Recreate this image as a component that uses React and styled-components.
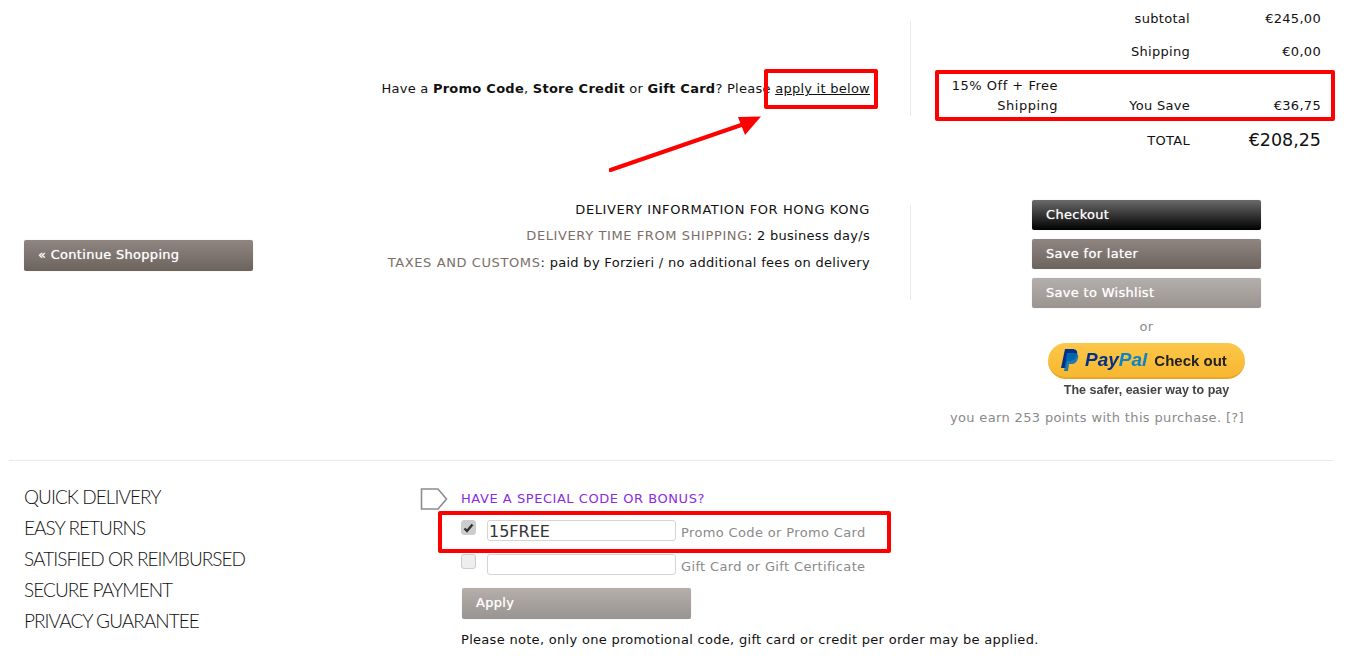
import styled, { createGlobalStyle } from "styled-components";

const GlobalStyle = createGlobalStyle`
  html, body {
    margin: 0;
    padding: 0;
    background: #fff;
    overflow: hidden;
  }
  body {
    font-family: "DejaVu Sans", Verdana, sans-serif;
    font-size: 13px;
    letter-spacing: 0.3px;
    color: #111;
  }
`;

const App = () => {
  return (
    <Page>
      <GlobalStyle />
      <TopSection>
        <PromoCol>
          <PromoText>
            Have a <b>Promo Code</b>, <b>Store Credit</b> or <b>Gift Card</b>? Please{" "}
            <u>apply it below</u>
          </PromoText>
        </PromoCol>
        <Totals>
          <Label>subtotal</Label>
          <Amount>€245,00</Amount>
          <Label>Shipping</Label>
          <Amount>€0,00</Amount>
          <DiscountName>15% Off + Free Shipping</DiscountName>
          <DiscountLabel>You Save</DiscountLabel>
          <DiscountAmount>€36,75</DiscountAmount>
          <TotalLabel>TOTAL</TotalLabel>
          <TotalAmount>€208,25</TotalAmount>
        </Totals>
      </TopSection>

      <MiddleSection>
        <ContinueCol>
          <Button $tone="brown" $wide>« Continue Shopping</Button>
        </ContinueCol>
        <DeliveryCol>
          <DeliveryTitle>DELIVERY INFORMATION FOR HONG KONG</DeliveryTitle>
          <DeliveryLine><Muted>DELIVERY TIME FROM SHIPPING</Muted>: 2 business day/s</DeliveryLine>
          <DeliveryLine><Muted>TAXES AND CUSTOMS</Muted>: paid by Forzieri / no additional fees on delivery</DeliveryLine>
        </DeliveryCol>
        <CheckoutCol>
          <Button $tone="black">Checkout</Button>
          <Button $tone="brown">Save for later</Button>
          <Button $tone="grey">Save to Wishlist</Button>
          <OrText>or</OrText>
          <PayPalButton>
            <svg width="20" height="24" viewBox="0 0 20 24">
              <path d="M5 1h7c4 0 6 2 5 6-1 4-4 6-8 6H7l-1 7H1z" fill="#003087" />
              <path d="M7 5h7c3 0 5 2 4 5-1 4-3 6-7 6H9l-1 7H4z" fill="#0070ba" opacity="0.85" />
            </svg>
            <PayPalName>Pay<span>Pal</span></PayPalName>
            <PayPalAction>Check out</PayPalAction>
          </PayPalButton>
          <PayPalNote>The safer, easier way to pay</PayPalNote>
          <PointsText>you earn 253 points with this purchase. [?]</PointsText>
        </CheckoutCol>
      </MiddleSection>

      <BottomSection>
        <Benefits>
          <li>QUICK DELIVERY</li>
          <li>EASY RETURNS</li>
          <li>SATISFIED OR REIMBURSED</li>
          <li>SECURE PAYMENT</li>
          <li>PRIVACY GUARANTEE</li>
        </Benefits>
        <CodeCol>
          <CodeHeading>
            <TagIcon width="28" height="24" viewBox="0 0 28 24">
              <path d="M1.500 2h16.500l8.500 10-8.500 10h-16.500z" fill="#fff" stroke="#8c8c8c" strokeWidth="1.600" />
            </TagIcon>
            <span>HAVE A SPECIAL CODE OR BONUS?</span>
          </CodeHeading>
          <CodeRow>
            <Check $checked>
              <svg width="11" height="10" viewBox="0 0 11 10">
                <path d="M1.500 5.500l2.500 2.500 5.500-6.500" fill="none" stroke="#333" strokeWidth="2.400" />
              </svg>
            </Check>
            <CodeInput readOnly value="15FREE" />
            <CodeHint>Promo Code or Promo Card</CodeHint>
          </CodeRow>
          <CodeRow>
            <Check />
            <CodeInput readOnly value="" />
            <CodeHint>Gift Card or Gift Certificate</CodeHint>
          </CodeRow>
          <ApplyButton $tone="grey" $wide>Apply</ApplyButton>
          <CodeNote>Please note, only one promotional code, gift card or credit per order may be applied.</CodeNote>
        </CodeCol>
      </BottomSection>

      {/* red annotations drawn over the screenshot */}
      <RedBox $left="764px" $top="69px" $width="114px" $height="40px" />
      <RedBox $left="935px" $top="70px" $width="400px" $height="51px" />
      <RedBox $left="438px" $top="511px" $width="453px" $height="42px" />
      <Arrow width="160" height="60" viewBox="0 0 160 60">
        <path d="M1.500 57L138 10" stroke="#f00" strokeWidth="4" strokeLinecap="round" />
        <path d="M152 3.500L129 4l7 18z" fill="#f00" />
      </Arrow>
    </Page>
  );
};

const Page = styled.div`
  position: relative;
  width: 1348px;
  height: 668px;
  overflow: hidden;
`;

const TopSection = styled.div`
  display: flex;
  height: 165px;
`;
const PromoCol = styled.div`
  width: 870px;
  height: 95px;
  margin-top: 21px;
  padding-right: 40px;
  border-right: 1px solid #eaeaea;
  text-align: right;
  letter-spacing: 0.26px;
`;
const PromoText = styled.div`
  margin-top: 60px;
  line-height: 16px;
`;
const Totals = styled.div`
  display: grid;
  grid-template-columns: 107px 132px 131px;
  grid-template-rows: 33px 33px 56px 32px;
  margin: 2px 0 0 40px;
  height: 154px;
  align-items: center;
  text-align: right;
`;
const Label = styled.div`
  grid-column: 2;
`;
const Amount = styled.div`
  grid-column: 3;
`;
const DiscountName = styled.div`
  grid-column: 1;
  line-height: 20px;
  letter-spacing: 0.5px;
`;
const DiscountLabel = styled.div`
  grid-column: 2;
  line-height: 20px;
  padding-top: 20px;
`;
const DiscountAmount = styled.div`
  grid-column: 3;
  line-height: 20px;
  padding-top: 20px;
`;
const TotalLabel = styled.div`
  grid-column: 2;
  padding-top: 1px;
`;
const TotalAmount = styled.div`
  grid-column: 3;
  font-size: 17.500px;
  letter-spacing: 0;
`;

const MiddleSection = styled.div`
  display: flex;
  height: 295px;
  border-bottom: 1px solid #eaeaea;
  margin: 0 14px 0 9px;
`;
const ContinueCol = styled.div`
  width: 244px;
  padding: 75px 0 0 15px;
  box-sizing: border-box;
`;
const DeliveryCol = styled.div`
  width: 617px;
  height: 95px;
  padding-right: 40px;
  margin-top: 40px;
  border-right: 1px solid #eaeaea;
  text-align: right;
`;
const DeliveryTitle = styled.div`
  line-height: 26px;
  margin-top: -8px;
  letter-spacing: 0.59px;
`;
const DeliveryLine = styled.div`
  line-height: 26.500px;
`;
const Muted = styled.span`
  color: #7b6f68;
  letter-spacing: 0.6px;
`;
const CheckoutCol = styled.div`
  margin-left: 121px;
  margin-top: 35px;
  width: 229px;
  display: flex;
  flex-direction: column;
  align-items: center;
  gap: 9px;
`;

const tones = {
  black: "linear-gradient(#6a6a6a, #000)",
  brown: "linear-gradient(#8f8682, #6c635d)",
  grey: "linear-gradient(#b5afab, #9a9490)",
};
const Button = styled.div`
  box-sizing: border-box;
  width: ${(props) => (props.$wide ? "229px" : "100%")};
  height: ${(props) => (props.$wide ? "31px" : "30px")};
  line-height: 29px;
  padding-left: 14px;
  border-radius: 2px;
  color: #fff;
  background: ${(props) => tones[props.$tone]};
  box-shadow: 0 0 1px rgba(0, 0, 0, 0.25);
  text-shadow: 0 0 1px rgba(255, 255, 255, 0.7);
`;
const ApplyButton = styled(Button)`
  margin: 3px 0 0 1px;
`;
const OrText = styled.div`
  color: #8a8a8a;
  line-height: 16px;
  margin-top: 2px;
`;
const PayPalButton = styled.div`
  box-sizing: border-box;
  width: 197px;
  height: 36px;
  margin-top: -1px;
  border-radius: 18px;
  background: linear-gradient(#fdc74a, #f7b731);
  border-bottom: 2px solid #eaa628;
  display: flex;
  align-items: center;
  padding-left: 12px;
  gap: 5px;
  letter-spacing: 0;
  filter: blur(0.3px);
`;
const PayPalName = styled.span`
  font-family: "Liberation Sans", Arial, sans-serif;
  font-size: 19px;
  font-weight: 700;
  font-style: italic;
  color: #003087;
  span {
    color: #0a84c6;
  }
`;
const PayPalAction = styled.span`
  font-family: "Liberation Sans", Arial, sans-serif;
  font-size: 15px;
  font-weight: 700;
  color: #222;
  margin-left: 2px;
`;
const PayPalNote = styled.div`
  font-family: "Liberation Sans", Arial, sans-serif;
  font-size: 12.500px;
  font-weight: 700;
  letter-spacing: 0;
  color: #444;
  margin-top: -5px;
  line-height: 14px;
  filter: blur(0.3px);
`;
const PointsText = styled.div`
  color: #8a8a8a;
  white-space: nowrap;
  line-height: 16px;
  letter-spacing: 0.35px;
  align-self: flex-end;
  margin: 4px 17px 0 0;
`;

const BottomSection = styled.div`
  display: flex;
  padding-top: 21px;
`;
const Benefits = styled.ul`
  list-style: none;
  margin: -1px 0 0;
  padding: 0 0 0 24px;
  width: 396px;
  box-sizing: border-box;
  font-family: Lato, sans-serif;
  font-weight: 300;
  font-size: 19px;
  letter-spacing: -0.95px;
  line-height: 31px;
  color: #111;
`;
const CodeCol = styled.div`
  padding-left: 65px;
  position: relative;
`;
const CodeHeading = styled.div`
  color: #8a2be2;
  line-height: 16px;
  letter-spacing: 0.55px;
  margin-top: 9px;
  height: 29px;
`;
const TagIcon = styled.svg`
  position: absolute;
  left: 24px;
  top: 5px;
`;
const CodeRow = styled.div`
  display: flex;
  align-items: flex-start;
  height: 21px;
  margin-bottom: 13px;
`;
const Check = styled.div`
  box-sizing: border-box;
  width: 15px;
  height: 15px;
  margin-right: 11px;
  border: 1px solid #ccc;
  border-radius: 3px;
  background: ${(props) => (props.$checked ? "#ccc" : "#eee")};
  display: flex;
  align-items: center;
  justify-content: center;
`;
const CodeInput = styled.input`
  box-sizing: border-box;
  width: 189px;
  height: 21px;
  padding: 2px 0 0 1px;
  border: 1px solid #d4d4d4;
  border-radius: 3px;
  font-family: "DejaVu Sans", Verdana, sans-serif;
  font-size: 16px;
  color: #333;
  outline: none;
`;
const CodeHint = styled.span`
  color: #8a8a8a;
  margin: 5px 0 0 5px;
  line-height: 16px;
  letter-spacing: 0.36px;
`;
const CodeNote = styled.div`
  margin-top: 13px;
  line-height: 16px;
  white-space: nowrap;
`;

const RedBox = styled.div`
  position: absolute;
  box-sizing: border-box;
  left: ${(props) => props.$left};
  top: ${(props) => props.$top};
  width: ${(props) => props.$width};
  height: ${(props) => props.$height};
  border: 4px solid #f00;
  border-radius: 2px;
`;
const Arrow = styled.svg`
  position: absolute;
  left: 609px;
  top: 113px;
`;

export default App;
